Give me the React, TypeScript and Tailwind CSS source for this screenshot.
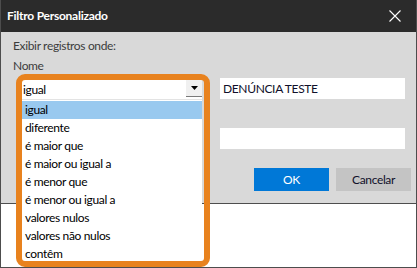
import React from "react";

const options = [
  "igual",
  "diferente",
  "é maior que",
  "é maior ou igual a",
  "é menor que",
  "é menor ou igual a",
  "valores nulos",
  "valores não nulos",
  "contêm",
];

export default function App() {
  return (
    <div
      className="w-[417px] h-[268px] flex flex-col bg-white border-x border-b border-[#4d4d4d] overflow-hidden text-[12px] leading-4 tracking-[-0.35px]"
      style={{ fontFamily: "Lato, 'Liberation Sans', sans-serif" }}
    >
      {/* title bar */}
      <div className="h-8 shrink-0 bg-[#2b2b2b] flex items-center justify-between pl-[6px] pr-[15px]">
        <span className="text-white font-bold tracking-[-0.25px]">Filtro Personalizado</span>
        <svg width="12" height="12" viewBox="0 0 12 12">
          <path d="M0.5 0.5 L11.5 11.5 M11.5 0.5 L0.5 11.5" stroke="#ffffff" strokeWidth="1.1" />
        </svg>
      </div>

      {/* body */}
      <div className="h-[172px] shrink-0 bg-[#d9d9d9] border-b border-[#4d4d4d] pl-[12px] pr-[4px] pt-[6px] text-[#3c3c3c]">
        <div>Exibir registros onde:</div>
        <div className="mt-1">Nome</div>

        <div className="flex mt-1 gap-[10px]">
          {/* combo column */}
          <div className="relative w-[197px] h-[100px]">
            <div className="absolute left-[3px] top-[-4px] w-[194px] h-[193px] border-[6px] border-[#e8821e] rounded-[9px] z-20 pointer-events-none" />
            <div className="ml-[9px] mt-[2px] w-[180px] h-[19px] bg-white flex items-center justify-between">
              <span className="pl-px text-black">igual</span>
              <div className="w-[16px] h-[17px] mb-[2px] bg-[#f0f0f0] border-b border-[#7a7a7a] flex items-center justify-center">
                <svg width="7" height="4" viewBox="0 0 7 4">
                  <path d="M0 0 H7 L3.5 4 Z" fill="#000" />
                </svg>
              </div>
            </div>
            <div className="absolute left-[9px] top-[21px] w-[180px] z-10 bg-white border-t border-[#e3e3e3] pt-px pb-4">
              {options.map((o, i) => (
                <div
                  key={o}
                  className={
                    "h-[18px] pl-[3px] flex items-center text-black " +
                    (i === 0 ? "bg-[#99c9ef]" : "")
                  }
                >
                  {o}
                </div>
              ))}
            </div>
          </div>

          {/* right column */}
          <div className="w-[191px] flex flex-col">
            <div className="w-[185px] h-[21px] bg-white flex items-center pl-[3px] text-[#10102a]">
              DENÚNCIA TESTE
            </div>
            <div className="w-[185px] h-[21px] bg-white mt-[29px]" />
            <div className="flex justify-end gap-[7px] mt-[19px]">
              <button className="w-[75px] h-[23px] bg-[#0078d7] text-white">OK</button>
              <button className="w-[75px] h-[23px] bg-[#c4c4c4] text-[#10102a]">Cancelar</button>
            </div>
          </div>
        </div>
      </div>

      <div className="flex-1 bg-white" />
    </div>
  );
}
